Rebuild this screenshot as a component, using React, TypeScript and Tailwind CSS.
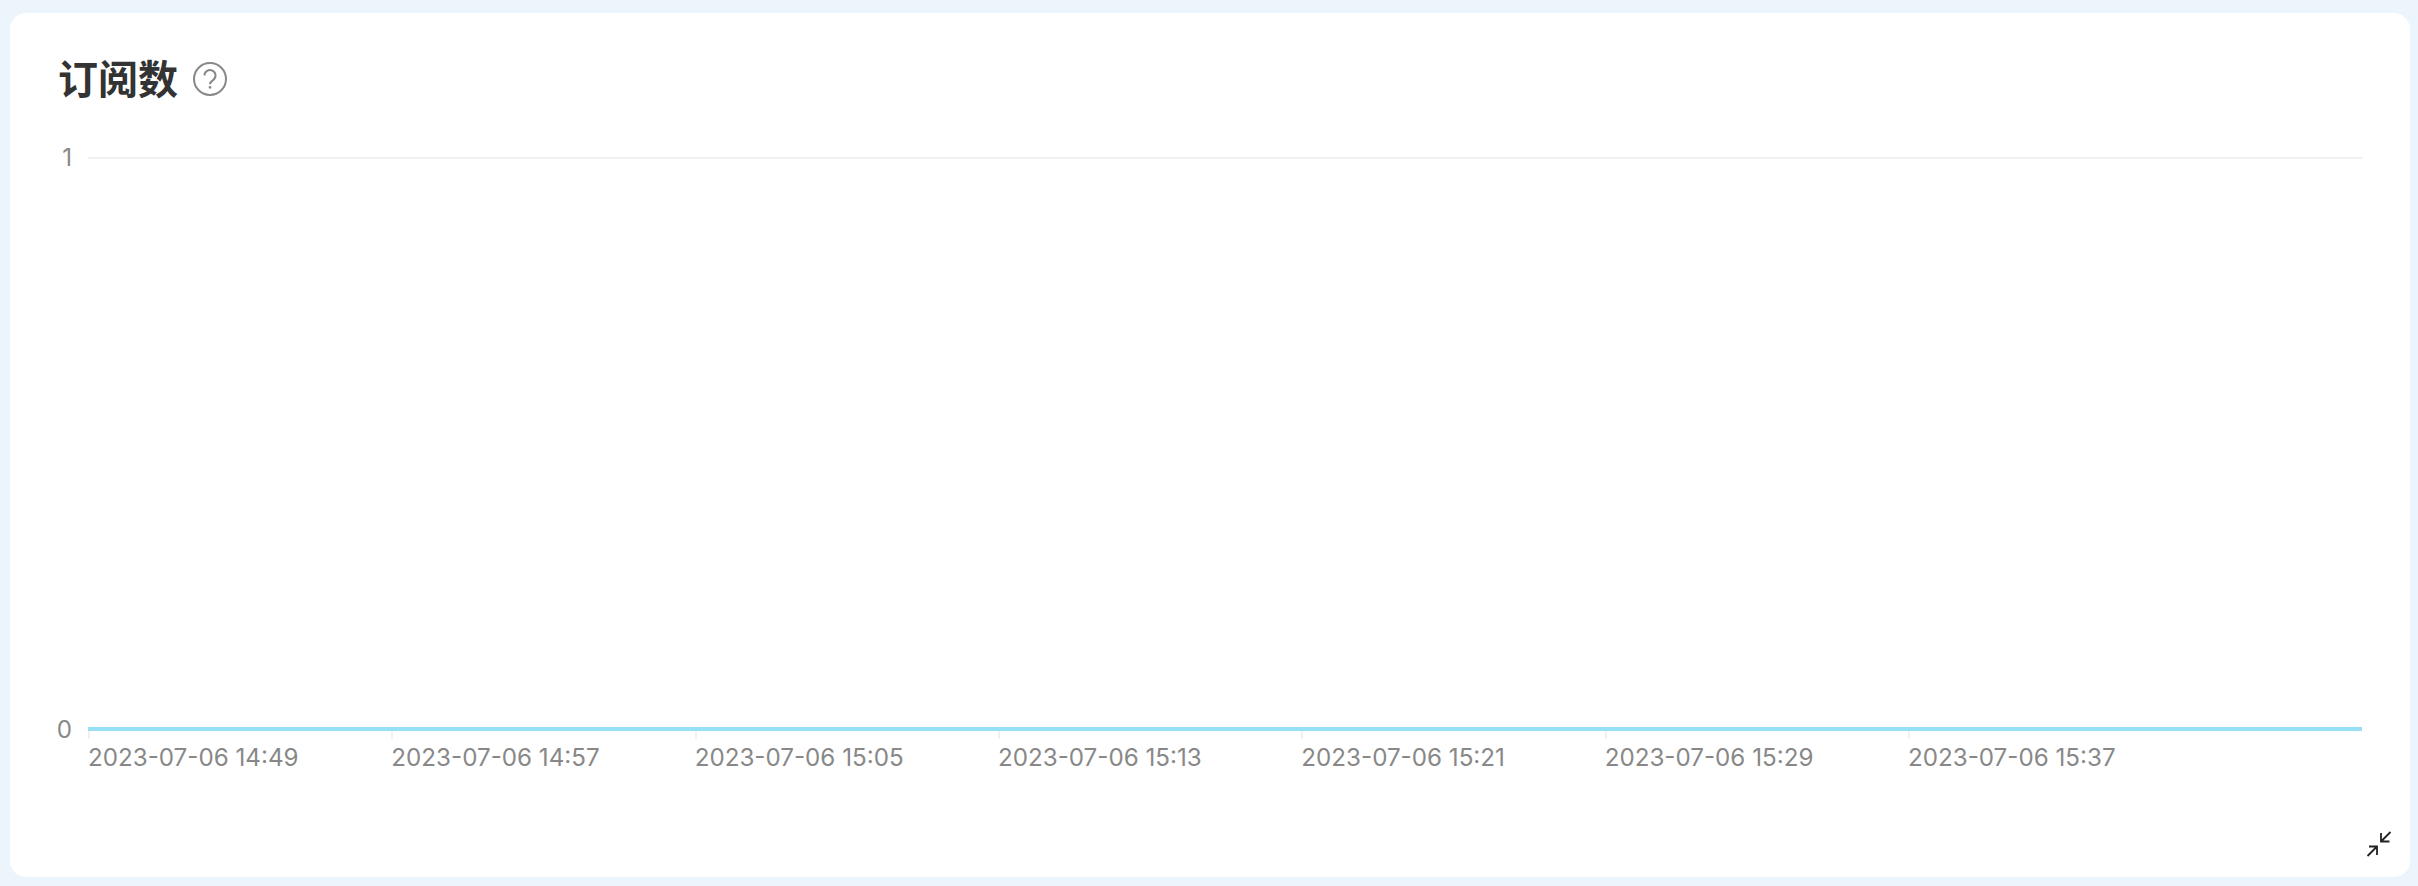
const ticks = [
  "2023-07-06 14:49",
  "2023-07-06 14:57",
  "2023-07-06 15:05",
  "2023-07-06 15:13",
  "2023-07-06 15:21",
  "2023-07-06 15:29",
  "2023-07-06 15:37",
];

function HelpIcon() {
  return (
    <svg width="36" height="36" viewBox="0 0 36 36" fill="none" stroke="#888" strokeWidth="2">
      <circle cx="18" cy="18" r="16" />
      <path d="M12.5 14.5a5.5 5.5 0 1 1 8.8 4.4c-2 1.5-3.3 2.2-3.3 4.4" />
      <circle cx="18" cy="26.4" r="1.3" fill="#888" stroke="none" />
    </svg>
  );
}

function CollapseIcon() {
  return (
    <svg width="26" height="26" viewBox="0 0 26 26" fill="none" stroke="#222" strokeWidth="1.8">
      <path d="M24.5 1 15 10.5M15 2v8.5h8.5" />
      <path d="M1.5 25 11 15.5M3 15.5h8V24" />
    </svg>
  );
}

export default function App() {
  return (
    <div className="h-[886px] bg-[#ecf4fc] pt-[13px] pr-2 pb-[9px] pl-[10px] font-['Inter','Noto_Sans_CJK_SC',sans-serif]">
      <div className="relative flex h-full flex-col rounded-2xl bg-white pl-[48px] pr-[48px]">
        <div className="mt-[39px] flex h-[56px] items-center gap-[14px]">
          <h1 className="text-[40px] leading-[56px] font-bold text-[#333]">订阅数</h1>
          <span className="mb-[2px]">
            <HelpIcon />
          </span>
        </div>

        <div className="mt-[49px] flex text-[24.2px] text-[#888]">
          <div className="-mt-[13px] flex h-[600px] w-[30px] shrink-0 flex-col items-end justify-between pr-[16px]">
            <span className="leading-[28px]">1</span>
            <span className="leading-[28px]">0</span>
          </div>
          <div className="flex-1">
            <div className="h-[570px] border-t-2 border-[#f0f0f0]" />
            <div className="h-1 bg-[#97dff5]" />
            <div className="flex">
              {ticks.map((t) => (
                <div key={t} className="w-[303.33px] shrink-0">
                  <div className="h-2 w-0.5 bg-[#eef0f6]" />
                  <div className="mt-[5px] leading-[28px] whitespace-nowrap">{t}</div>
                </div>
              ))}
            </div>
          </div>
        </div>

        <button className="absolute right-[18px] bottom-[20px]">
          <CollapseIcon />
        </button>
      </div>
    </div>
  );
}
